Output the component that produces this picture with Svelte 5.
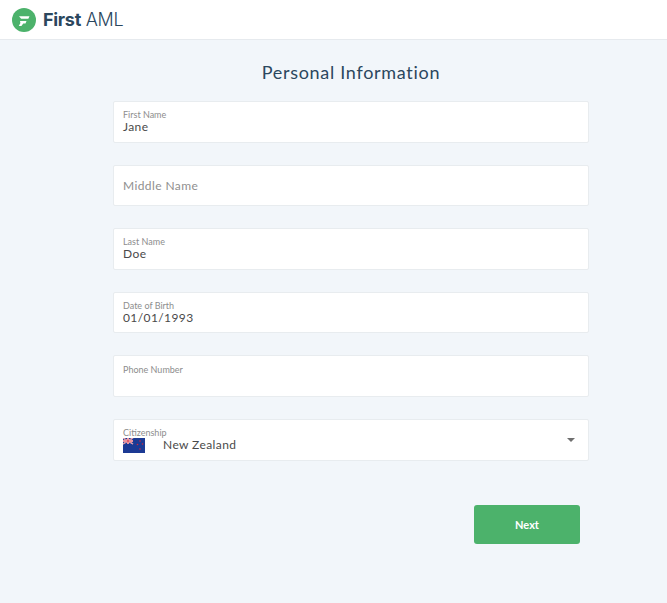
<script>
  const fields = [
    { label: "First Name", value: "Jane" },
    { label: "Middle Name", value: "" },
    { label: "Last Name", value: "Doe" },
    { label: "Date of Birth", value: "01/01/1993" },
    { label: "Phone Number", value: "", floated: true }
  ];
</script>

<div class="page">
  <header class="topbar">
    <svg class="logo" viewBox="0 0 24 24" width="24" height="24">
      <circle cx="12" cy="12" r="12" fill="#4cb26b" />
      <path d="M7 8.2h10.5l-1.2 2.6H9.2z" fill="#fff" />
      <path d="M8 13h6.5l-1 2.4h-2.2l-1.9 2.6H6.8l1.6-3z" fill="#fff" />
    </svg>
    <span class="brand"><b>First</b> AML</span>
  </header>

  <main class="content">
    <h1>Personal Information</h1>

    <div class="form">
      {#each fields as field}
        <div class="field">
          {#if field.value || field.floated}
            <span class="label">{field.label}</span>
            <span class="value">{field.value}</span>
          {:else}
            <span class="placeholder">{field.label}</span>
          {/if}
        </div>
      {/each}

      <div class="field select">
        <span class="label">Citizenship</span>
        <div class="country">
          <svg class="flag" viewBox="0 0 22 15" width="22" height="15">
            <rect width="22" height="15" fill="#1c3a94" />
            <path d="M0 0l10 6M10 0L0 6" stroke="#fff" stroke-width="1.4" />
            <path d="M0 0l10 6M10 0L0 6" stroke="#d8263c" stroke-width="0.6" />
            <path d="M5 0v6M0 3h10" stroke="#fff" stroke-width="2" />
            <path d="M5 0v6M0 3h10" stroke="#d8263c" stroke-width="1" />
            <circle cx="17" cy="3" r="0.8" fill="#d8263c" />
            <circle cx="14.5" cy="6.5" r="0.8" fill="#d8263c" />
            <circle cx="19.5" cy="6" r="0.8" fill="#d8263c" />
            <circle cx="17" cy="11" r="0.8" fill="#d8263c" />
          </svg>
          <span class="value">New Zealand</span>
        </div>
        <span class="arrow"></span>
      </div>
    </div>

    <div class="actions">
      <button class="next">Next</button>
    </div>
  </main>
</div>

<style>
  :global(body) {
    margin: 0;
    background: #f2f6fa;
  }

  .page {
    height: 603px;
    font-family: "Lato", "Open Sans", sans-serif;
    background: #f2f6fa;
    overflow: hidden;
  }

  .topbar {
    display: flex;
    align-items: center;
    gap: 7px;
    height: 39px;
    padding-left: 12px;
    background: #fff;
    border-bottom: 1px solid #e6eaee;
  }

  .brand {
    font-family: "Inter", sans-serif;
    font-size: 18px;
    font-weight: 300;
    color: #2b475e;
    letter-spacing: -0.3px;
  }

  .brand b {
    font-weight: 700;
  }

  .content {
    width: 476px;
    margin-left: 113px;
  }

  h1 {
    margin: 21px 0 18px;
    font-size: 18px;
    line-height: 22px;
    font-weight: 400;
    text-align: center;
    color: #2b475e;
    letter-spacing: 0.7px;
  }

  .form {
    display: flex;
    flex-direction: column;
    gap: 22px;
  }

  .field {
    position: relative;
    display: flex;
    flex-direction: column;
    justify-content: center;
    box-sizing: border-box;
    height: 41.6px;
    padding: 0 9px;
    background: #fff;
    border: 1px solid #e8ecef;
    border-radius: 2px;
  }

  .label {
    font-size: 9px;
    line-height: 11px;
    color: #8d8d8d;
  }

  .value {
    font-size: 12px;
    line-height: 14px;
    min-height: 14px;
    color: #4a4a4a;
    letter-spacing: 0.4px;
  }

  .placeholder {
    font-size: 12px;
    color: #8f8f8f;
    letter-spacing: 0.4px;
  }

  .country {
    display: flex;
    align-items: center;
    gap: 18px;
  }

  .flag {
    display: block;
  }

  .arrow {
    position: absolute;
    right: 13px;
    top: 18px;
    border-left: 4px solid transparent;
    border-right: 4px solid transparent;
    border-top: 4px solid #6f6f6f;
  }

  .actions {
    display: flex;
    justify-content: flex-end;
    margin-top: 44px;
    padding-right: 9px;
  }

  .next {
    width: 106px;
    height: 39px;
    border: none;
    border-radius: 3px;
    background: #4cb26b;
    color: #fff;
    font-family: inherit;
    font-size: 11px;
    font-weight: 700;
  }
</style>
